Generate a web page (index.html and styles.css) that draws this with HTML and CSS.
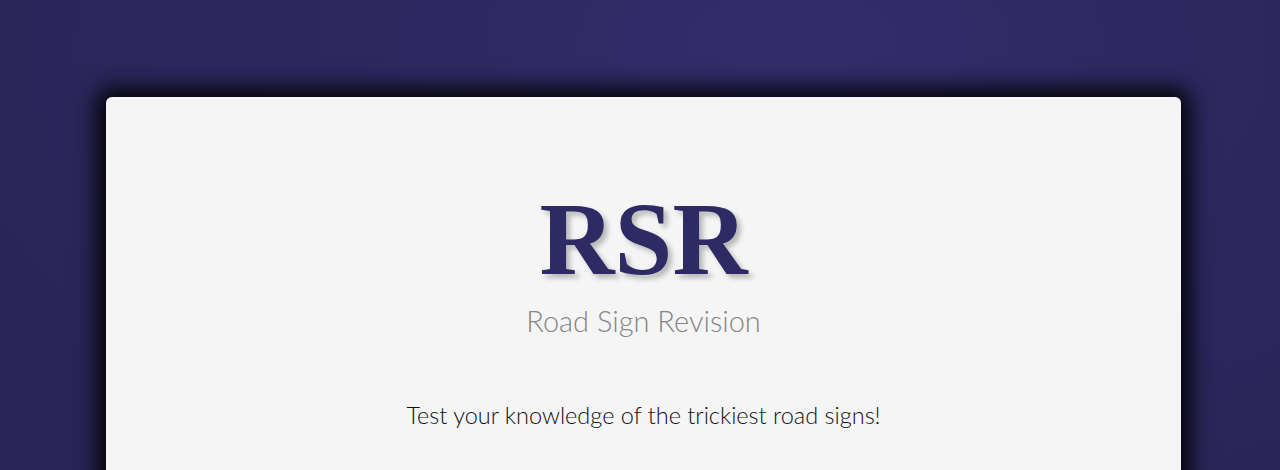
FILE: index.html
```html
<!DOCTYPE html>
<html lang="en">
<head>
<meta charset="utf-8">
<title>RSR - Road Sign Revision</title>
<link rel="stylesheet" href="styles.css">
</head>
<body>
<main class="page">
  <section class="card">
    <h1 class="logo">RSR</h1>
    <p class="tagline">Road Sign Revision</p>
    <p class="intro">Test your knowledge of the trickiest road signs!</p>
  </section>
</main>
</body>
</html>
```
FILE: styles.css
```css
html, body {
  margin: 0;
  height: 100%;
}
body {
  background: radial-gradient(ellipse 900px 500px at 62% 10%, #332d6b 0%, #2d2860 45%, #2a2558 100%);
  background-color: #2a2558;
  font-family: "Lato", "Liberation Sans", sans-serif;
  overflow: hidden;
}
.page {
  padding: 97px 0 0 106px;
}
.card {
  width: 1075px;
  min-height: 600px;
  background: #f5f5f5;
  border-radius: 6px;
  box-shadow: 0 0 22px 9px rgba(0, 0, 0, 0.95);
  display: flex;
  flex-direction: column;
  align-items: center;
  padding-top: 90px;
  box-sizing: border-box;
}
.logo {
  margin: 0;
  font-family: "Liberation Serif", "DejaVu Serif", serif;
  font-weight: 700;
  font-size: 104px;
  line-height: 1;
  color: #2e2a64;
  text-shadow: 4px 4px 5px rgba(0, 0, 0, 0.25);
}
.tagline {
  margin: 13px 0 0;
  font-weight: 300;
  font-size: 29px;
  line-height: 1.2;
  color: #858585;
}
.intro {
  margin: 62px 0 0;
  font-weight: 300;
  font-size: 23.5px;
  line-height: 1.2;
  color: #111;
}
```
